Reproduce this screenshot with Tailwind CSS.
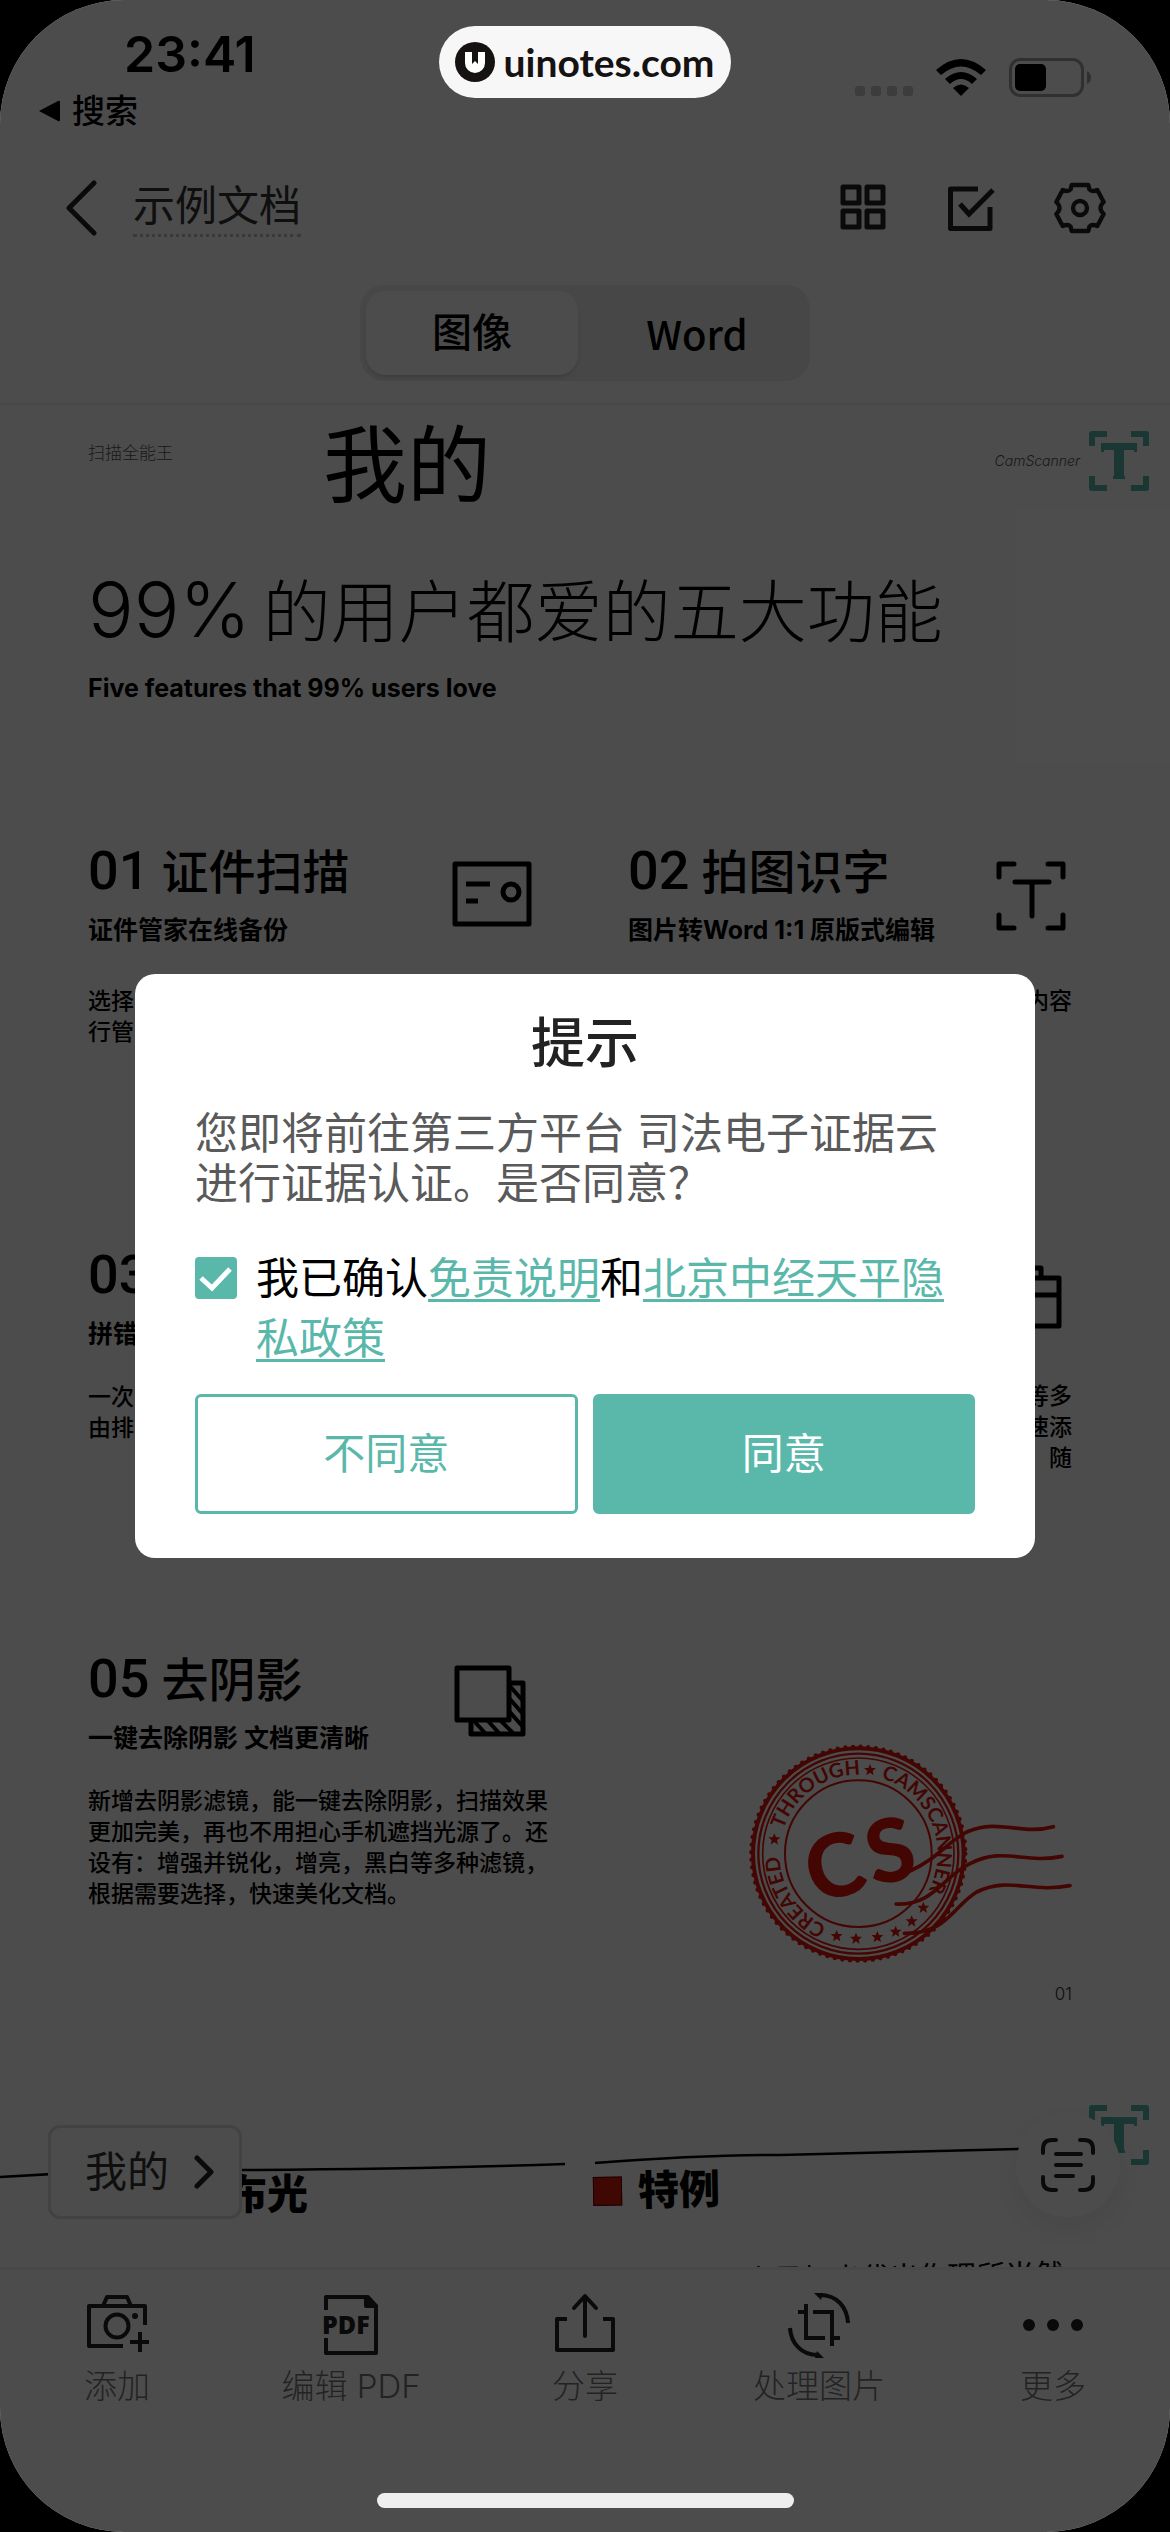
<!DOCTYPE html>
<html lang="zh-CN">
<head>
    <meta charset="UTF-8">
    <meta name="viewport" content="width=device-width, initial-scale=1.0">
    <title>示例文档</title>
    <script src="https://cdn.jsdelivr.net/npm/@tailwindcss/browser@4"></script>
</head>
<body class="bg-black font-['Inter','Noto_Sans_CJK_SC',sans-serif] text-[#222]">
    <div class="relative flex min-h-screen flex-col overflow-hidden rounded-[124px] bg-white">

        <!-- Status bar -->
        <header class="border-b-2 border-[#f0f0f0]">
            <div class="flex items-start justify-between pr-[78px] pl-[38px] pt-6 text-black">
                <div>
                    <p class="pl-[86px] text-[50px] leading-[60px] font-semibold">23:41</p>
                    <a href="#" class="flex items-center gap-3 text-[33px] leading-[54px] font-medium">
                        <svg width="22" height="22" viewBox="0 0 22 22"><path d="M1 11 20 1q2-1 2 1v18q0 2-2 1z" /></svg>
                        搜索
                    </a>
                </div>
                <div class="flex items-end gap-[22px] pt-[34px]">
                    <svg width="58" height="40" viewBox="0 0 58 40" fill="#c8c8c8">
                        <rect y="28" width="10" height="10" rx="3" />
                        <rect x="16" y="28" width="10" height="10" rx="3" />
                        <rect x="32" y="28" width="10" height="10" rx="3" />
                        <rect x="48" y="28" width="10" height="10" rx="3" />
                    </svg>
                    <svg width="52" height="40" viewBox="0 0 52 40">
                        <path d="M1 12Q26-10 51 12L46 17Q26 0 6 17Z" />
                        <path d="M10 21Q26 7 42 21L37 26Q26 16 15 26Z" />
                        <path d="M18 30Q26 23 34 30L26 38Z" />
                    </svg>
                    <svg width="83" height="40" viewBox="0 0 83 40">
                        <rect x="1.500" y="1.500" width="72" height="36" rx="10" fill="none" stroke="#a0a0a0" stroke-width="3" />
                        <rect x="6" y="6" width="31" height="27" rx="5" />
                        <path d="M78 13q4 2 4 6.500T78 26z" fill="#a0a0a0" />
                    </svg>
                </div>
            </div>

            <!-- Title bar -->
            <div class="flex items-center justify-between pt-10 pr-[61px] pl-[65px]">
                <div class="flex items-center gap-9">
                    <button aria-label="返回">
                        <svg width="32" height="56" viewBox="0 0 32 56" fill="none" stroke="#222" stroke-width="5" stroke-linecap="round" stroke-linejoin="round"><path d="M29 3 4 28l25 25" /></svg>
                    </button>
                    <h1 class="border-b-3 border-dotted border-[#c0c0c0] text-[42px] leading-[56px] text-[#333]">示例文档</h1>
                </div>
                <div class="flex items-center gap-14">
                    <button aria-label="网格">
                        <svg width="52" height="48" viewBox="0 0 52 48" fill="none" stroke="#222" stroke-width="5" stroke-linejoin="round">
                            <rect x="4" y="3" width="16" height="16" />
                            <rect x="28" y="3" width="16" height="16" />
                            <rect x="4" y="27" width="16" height="16" />
                            <rect x="28" y="27" width="16" height="16" />
                        </svg>
                    </button>
                    <button aria-label="选择">
                        <svg width="48" height="48" viewBox="0 0 48 48" fill="none" stroke="#222" stroke-width="5" stroke-linejoin="round">
                            <path d="M31 5H3.500v39.500H43V23" />
                            <path d="m13 20 9 10L46 6" stroke-linejoin="miter" />
                        </svg>
                    </button>
                    <button aria-label="设置">
                        <svg width="58" height="58" viewBox="693 474 174 174" fill="none" stroke="#222" stroke-width="13" stroke-linejoin="round">
                            <path d="M755 492H805L808 505Q816 514 832 507L851 543Q832 561 851 579L832 615Q816 608 808 617L805 630H755L752 617Q744 608 728 615L709 579Q728 561 709 543L728 507Q744 514 752 505Z" />
                            <circle cx="780" cy="561" r="21" />
                        </svg>
                    </button>
                </div>
            </div>

            <!-- View switch -->
            <div class="flex justify-center pt-12 pb-[22px]">
                <div class="flex w-[450px] rounded-3xl bg-[#eee] p-1.5 text-[40px] leading-[84px] text-black">
                    <button class="w-[212px] rounded-[20px] bg-white font-medium shadow-md">图像</button>
                    <button class="flex-1 pl-3 font-['Noto_Sans_CJK_SC',sans-serif] text-[40px] font-medium">Word</button>
                </div>
            </div>
        </header>

        <main class="relative flex flex-1 flex-col overflow-hidden text-black">
            <!-- Page 1 -->
            <section class="relative pr-[98px] pl-[88px] pt-3">
                <div class="flex items-start whitespace-nowrap">
                    <span class="pt-6 text-[17px] leading-6 font-light text-[#555]">扫描全能王</span>
                    <span class="ml-[150px] text-[84px] leading-[98px]">我的</span>
                    <span class="ml-auto -mr-2 pt-8 text-[14px] leading-6 font-light italic text-[#555]">CamScanner</span>
                </div>
                <h2 class="mt-[54px] flex items-baseline gap-3 text-[68px] leading-[80px] font-light whitespace-nowrap"><span class="text-[76px]">99%</span>的用户都爱的五大功能</h2>
                <p class="mt-5 text-[25px] leading-8 font-bold">Five features that 99% users love</p>

                <svg class="absolute top-[26px] right-[21px]" width="60" height="60" viewBox="0 0 60 60" fill="#5ab8ab">
                    <path d="M0 3q0-3 3-3h15v6H6v9H0zM42 0h15q3 0 3 3v12h-6V6H42zM60 45v12q0 3-3 3H42v-6h12v-9zM18 60H3q-3 0-3-3V45h6v9h12z" />
                    <path d="M12 12h36v9h-3v-2H35v26h1v3H24v-3h1V19H15v2h-3z" />
                </svg>

                <div class="mt-[137px] grid auto-rows-[404px] grid-cols-2 gap-x-24 whitespace-nowrap">
                    <article>
                        <div class="flex justify-between">
                            <div>
                                <h3 class="text-[47px] leading-[60px] font-medium"><span class="mr-3 font-['Roboto',sans-serif] text-[54px]">01</span>证件扫描</h3>
                                <p class="mt-3 text-[25px] leading-8 font-bold">证件管家在线备份</p>
                            </div>
                            <svg class="mt-5" width="80" height="66" viewBox="0 0 80 66" fill="none" stroke="black" stroke-width="5" stroke-linejoin="round">
                                <path d="M3 3h74v60H3zM14 23h24M14 40h12" />
                                <circle cx="59" cy="31" r="8" />
                            </svg>
                        </div>
                        <p class="mt-10 text-[23px] leading-[31px] font-medium">选择<br>行管</p>
                    </article>
                    <article>
                        <div class="flex justify-between">
                            <div>
                                <h3 class="text-[47px] leading-[60px] font-medium"><span class="mr-3 font-['Roboto',sans-serif] text-[54px]">02</span>拍图识字</h3>
                                <p class="mt-3 text-[25px] leading-8 font-bold">图片转Word 1:1 原版式编辑</p>
                            </div>
                            <svg class="mt-5 mr-1.5" width="70" height="70" viewBox="0 0 70 70" fill="none" stroke="black" stroke-width="5" stroke-linecap="round" stroke-linejoin="round">
                                <path d="M3 16V3h15M52 3h15v13M67 54v13H52M18 67H3V54M19 21h34M36 21v34" />
                            </svg>
                        </div>
                        <p class="mt-10 text-right text-[23px] leading-[31px] font-medium">内容</p>
                    </article>
                    <article>
                        <h3 class="text-[47px] leading-[60px] font-medium"><span class="font-['Roboto',sans-serif] text-[54px]">03</span></h3>
                        <p class="mt-3 text-[25px] leading-8 font-bold">拼错</p>
                        <p class="mt-8 text-[23px] leading-[31px] font-medium">一次<br>由排</p>
                    </article>
                    <article>
                        <div class="flex h-[104px] justify-end">
                            <svg class="mt-5 mr-2.5" width="76" height="64" viewBox="0 0 76 64" fill="none" stroke="black" stroke-width="5" stroke-linejoin="round">
                                <path d="M3 13h70v48H3zM3 30h70M21 13V3h34v10" />
                            </svg>
                        </div>
                        <p class="mt-8 text-right text-[23px] leading-[31px] font-medium">等多<br>速添<br>随</p>
                    </article>
                    <article>
                        <div class="flex justify-between">
                            <div>
                                <h3 class="text-[47px] leading-[60px] font-medium"><span class="mr-3 font-['Roboto',sans-serif] text-[54px]">05</span>去阴影</h3>
                                <p class="mt-3 text-[25px] leading-8 font-bold">一键去除阴影 文档更清晰</p>
                            </div>
                            <svg class="mt-4 mr-1.5" width="72" height="72" viewBox="0 0 72 72" fill="none" stroke="black" stroke-width="5" stroke-linejoin="round">
                                <path d="M3 3h52v52H3zM55 18h14v51H17V55" />
                                <path d="m20 56 11 12M33 55l12 13M46 55l13 13M55 46l14 16M55 33l14 16M55 20l14 16" stroke-width="4" />
                            </svg>
                        </div>
                        <p class="mt-8 text-[23px] leading-[31px] font-medium">新增去阴影滤镜，能一键去除阴影，扫描效果<br>更加完美，再也不用担心手机遮挡光源了。还<br>设有：增强并锐化，增亮，黑白等多种滤镜，<br>根据需要选择，快速美化文档。</p>
                    </article>
                    <article class="flex flex-col items-end pt-[87px]">
                        <svg width="332" height="234" viewBox="60 40 996 702" fill="none" stroke="#e0150c">
                            <circle cx="415" cy="393" r="316" stroke-width="12" />
                            <circle cx="415" cy="393" r="321" stroke-width="13" stroke-dasharray="0 23" stroke-linecap="round" />
                            <circle cx="415" cy="393" r="300" stroke-width="7" />
                            <circle cx="415" cy="393" r="287" stroke-width="5" />
                            <circle cx="415" cy="393" r="220" stroke-width="6" />
                            <path id="ring" d="M415 630A237 237 0 1 1 416 630" stroke="none" />
                            <g fill="#e0150c" stroke="none" class="font-['Lato',sans-serif] font-bold" font-size="60">
                                <text><textPath href="#ring" startOffset="98">CREATED</textPath></text>
                                <text><textPath href="#ring" startOffset="446">THROUGH</textPath></text>
                                <text><textPath href="#ring" startOffset="812">CAMSCANNER</textPath></text>
                            </g>
                            <g fill="#e0150c" stroke="none" class="font-['Lato',sans-serif] font-black" font-size="262" text-anchor="middle">
                                <text x="343" y="524" transform="rotate(-15 343 430)">C</text>
                                <text x="510" y="477" transform="rotate(-12 510 383)">S</text>
                            </g>
                            <defs><path id="star" d="M0-18 5-6 18-6 8 3 11 16 0 8-11 16-8 3-18-6-5-6Z" /></defs>
                            <g fill="#e0150c" stroke="none">
                                <use href="#star" x="163" y="350" /><use href="#star" x="450" y="142" />
                                <use href="#star" x="610" y="555" /><use href="#star" x="575" y="596" />
                                <use href="#star" x="527" y="627" /><use href="#star" x="472" y="643" />
                                <use href="#star" x="408" y="648" /><use href="#star" x="350" y="640" />
                            </g>
                            <g stroke-width="11" stroke-linecap="round">
                                <path d="M570 445C650 410 680 360 740 328C840 285 900 340 1000 312" />
                                <path d="M528 544C640 550 670 460 750 423C850 370 910 425 1026 401" />
                                <path d="M553 632C680 635 700 550 770 508C870 460 930 512 1050 489" />
                            </g>
                        </svg>
                        <span class="mt-3 text-[17px] leading-6 font-light text-[#333]">01</span>
                    </article>
                </div>
            </section>

            <!-- Page 2 -->
            <section class="relative grid flex-1 grid-cols-2 pt-[108px] text-[41px] leading-[50px] font-black whitespace-nowrap">
                <svg class="absolute top-[90px] left-0 w-full" height="40" viewBox="0 0 1170 40" preserveAspectRatio="none" fill="none" stroke="black" stroke-width="2.500">
                    <path d="M0 34Q120 26 240 27 420 26 565 21M595 20Q700 12 780 12L1020 6" />
                </svg>
                <svg class="absolute top-[52px] right-[21px]" width="60" height="60" viewBox="0 0 60 60" fill="#5ab8ab">
                    <path d="M0 3q0-3 3-3h15v6H6v9H0zM42 0h15q3 0 3 3v12h-6V6H42zM60 45v12q0 3-3 3H42v-6h12v-9zM18 60H3q-3 0-3-3V45h6v9h12z" />
                    <path d="M12 12h36v9h-3v-2H35v26h1v3H24v-3h1V19H15v2h-3z" />
                </svg>
                <h3 class="pt-2 pl-[226px]">布光</h3>
                <div class="-mb-9 pl-2">
                    <h3 class="flex -rotate-1 items-center gap-4"><span class="size-[29px] border border-[#600] bg-[#d21c08]"></span>特例</h3>
                    <p class="-rotate-1 pt-[46px] pl-[122px] font-['Noto_Sans_CJK_SC',sans-serif] text-[29px] leading-9 font-normal">以次是打出代出作理所当然</p>
                </div>
            </section>

            <button class="absolute bottom-12 left-12 flex items-center gap-6 rounded-xl border-3 border-[#dedede] bg-white pr-6 pl-[34px] text-[42px] leading-[88px] text-[#333]">
                我的
                <svg width="22" height="34" viewBox="0 0 22 34" fill="none" stroke="#222" stroke-width="5" stroke-linecap="round" stroke-linejoin="round"><path d="m4 3 14 14L4 31" /></svg>
            </button>
            <button aria-label="识别文字" class="absolute right-[50px] bottom-[50px] flex size-[104px] items-center justify-center rounded-full bg-white shadow-[0_12px_40px_rgba(0,0,0,0.08)]">
                <svg width="54" height="54" viewBox="0 0 54 54" fill="none" stroke="#222" stroke-width="4" stroke-linecap="round">
                    <path d="M2 15V11Q2 2 11 2h4M39 2h4q9 0 9 9v4M52 39v4q0 9-9 9h-4M15 52h-4q-9 0-9-9v-4M15 16h25M15 27h25M15 38h17" />
                </svg>
            </button>
        </main>

        <!-- Bottom toolbar -->
        <nav class="grid grid-cols-5 border-t-3 border-[#f0f0f0] pt-[23px] pb-[117px] text-[33px] leading-[58px] font-light text-[#777]">
            <button class="flex flex-col items-center">
                <svg width="64" height="64" viewBox="0 0 64 64" fill="none" stroke="#222" stroke-width="4" stroke-linejoin="round">
                    <path d="M60 32V13H4v40h34M18 13l4-9h20l4 9M45 49h20M55 39v20" />
                    <circle cx="32" cy="33" r="11.500" /><circle cx="50" cy="23" r="3" fill="#222" stroke="none" />
                </svg>
                添加
            </button>
            <button class="flex flex-col items-center">
                <svg width="64" height="64" viewBox="0 0 64 64" fill="none" stroke="#222" stroke-width="4" stroke-linejoin="round">
                    <path d="M7 17V4h42l8 9v47H7V45" /><path d="M47 4v9h10z" fill="#222" />
                    <text x="3" y="41" font-size="25" class="font-['Open_Sans',sans-serif] font-extrabold" fill="#222" stroke="none">PDF</text>
                </svg>
                编辑 PDF
            </button>
            <button class="flex flex-col items-center">
                <svg width="64" height="64" viewBox="0 0 64 64" fill="none" stroke="#222" stroke-width="4" stroke-linejoin="round">
                    <path d="M14 26H4v31h56V26H50" /><path d="M32 43V4M21 15 32 3l11 12" stroke-linecap="round" />
                </svg>
                分享
            </button>
            <button class="flex flex-col items-center">
                <svg class="overflow-visible" width="64" height="64" viewBox="0 0 64 64" fill="none" stroke="#222" stroke-width="4">
                    <path d="M11 19h8M19 11v34h19M26 19h19v34M47 45h6" />
                    <path d="M33 2C50 2 60 14 61 30M3 35C4 50 14 62 31 62" />
                    <path d="M27 0h9l-2 7zM37 65h-9l2-7z" fill="#222" stroke="none" />
                </svg>
                处理图片
            </button>
            <button class="flex flex-col items-center">
                <svg width="64" height="64" viewBox="0 0 64 64" fill="#222">
                    <circle cx="8" cy="32" r="6" /><circle cx="32" cy="32" r="6" /><circle cx="56" cy="32" r="6" />
                </svg>
                更多
            </button>
        </nav>

        <!-- Consent dialog -->
        <div class="absolute inset-0 flex items-center justify-center bg-black/70">
            <div role="dialog" aria-labelledby="dialogTitle" class="w-[900px] rounded-[20px] bg-white px-15 pt-10 pb-11">
                <h2 id="dialogTitle" class="text-center text-[54px] leading-[60px] font-medium">提示</h2>
                <p class="mt-[34px] text-[43px] leading-[50px] text-[#5a5a5a]">您即将前往第三方平台 司法电子证据云进行证据认证。是否同意？</p>
                <div class="mt-10 flex gap-[19px]">
                    <span class="relative mt-[9px] size-[42px] shrink-0">
                        <input id="agree" type="checkbox" checked class="block size-full appearance-none rounded-[4px] border-3 border-[#5ab8ab] bg-[#5ab8ab]">
                        <svg class="pointer-events-none absolute inset-0" width="42" height="42" viewBox="0 0 42 42" fill="none" stroke="white" stroke-width="5"><path d="m6 21 11 10L35 12" /></svg>
                    </span>
                    <label for="agree" class="text-[43px] leading-[60px] text-black">我已确认<a href="#" class="text-[#5ab8ab] underline decoration-3 underline-offset-[5px]">免责说明</a>和<a href="#" class="text-[#5ab8ab] underline decoration-3 underline-offset-[5px]">北京中经天平隐私政策</a></label>
                </div>
                <div class="mt-[26px] grid grid-cols-2 gap-[15px] text-[42px] leading-[114px]">
                    <button class="rounded-md border-3 border-[#5ab8ab] text-[#5ab8ab]">不同意</button>
                    <button class="rounded-md border-3 border-[#5ab8ab] bg-[#5ab8ab] text-white">同意</button>
                </div>
            </div>
        </div>

        <!-- Site label and home indicator -->
        <div class="absolute inset-x-0 top-[26px] flex justify-center">
            <a href="#" class="flex h-[72px] items-center gap-2 rounded-full bg-[#f7f7f7] px-4 font-['Lato',sans-serif] text-[39px] font-bold text-[#161212]">
                <svg width="40" height="40" viewBox="0 0 40 40"><circle cx="20" cy="20" r="20" fill="#161212" /><path d="M10 10h7v12l3-3 3 3V10h7v11a10 10 0 0 1-20 0z" fill="white" /></svg>
                uinotes.com
            </a>
        </div>
        <div class="absolute inset-x-0 bottom-6 mx-auto h-[15px] w-[417px] rounded-full bg-[#eee]"></div>
    </div>
</body>
</html>
